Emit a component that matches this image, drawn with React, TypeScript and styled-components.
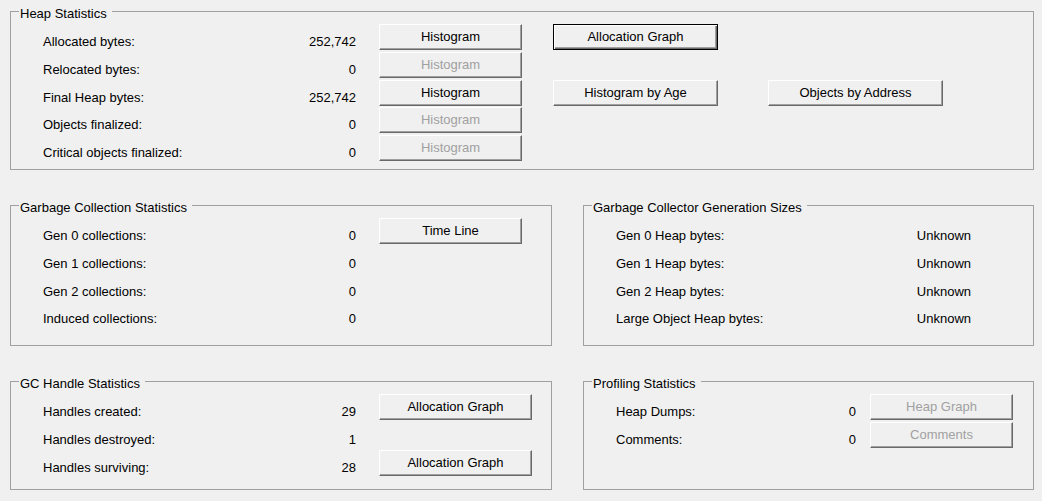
import React from 'react';
import styled, { createGlobalStyle, css } from 'styled-components';

const GlobalStyle = createGlobalStyle`
  html, body { margin: 0; padding: 0; background: #f0f0f0; }
  body {
    font-family: "Liberation Sans", Arial, sans-serif;
    font-size: 13px;
    color: #000;
  }
`;

const Page = styled.div`
  width: 1042px;
  height: 501px;
  box-sizing: border-box;
  padding: 11px 8px 0 10px;
  display: flex;
  flex-direction: column;
  gap: 35px;
`;

const BoxRow = styled.div`
  display: flex;
  gap: 31px;
`;

const GroupBox = styled.section<{ $w: number; $h: number }>`
  position: relative;
  box-sizing: border-box;
  width: ${p => p.$w}px;
  height: ${p => p.$h}px;
  border: 1px solid #a0a0a0;
  padding: 12px 0 0 32px;
`;

const Legend = styled.span`
  position: absolute;
  top: -6px;
  left: 8px;
  padding: 0 5px 0 1px;
  background: #f0f0f0;
  line-height: 15px;
  white-space: nowrap;
`;

const Grid = styled.div<{ $cols: string }>`
  display: grid;
  grid-template-columns: ${p => p.$cols};
  grid-auto-rows: 27.75px;
  align-items: start;
`;

const Stat = styled.div<{ $row: number }>`
  grid-column: 1;
  grid-row: ${p => p.$row};
  display: flex;
  justify-content: space-between;
  padding-top: 10px;
  line-height: 15px;
  white-space: nowrap;
`;

const Button = styled.button<{ $w: number; $row: number; $col: number; $default?: boolean }>`
  grid-row: ${p => p.$row};
  grid-column: ${p => p.$col};
  justify-self: end;
  box-sizing: border-box;
  width: ${p => p.$w}px;
  height: 26px;
  margin: 0;
  padding: 0 0 1px;
  font-family: "Liberation Sans", Arial, sans-serif;
  font-size: 13px;
  line-height: 23px;
  color: #000;
  background: #f0f0f0;
  border: 1px solid;
  border-color: #ffffff #696969 #696969 #ffffff;
  box-shadow: inset -1px -1px #a0a0a0;
  white-space: nowrap;
  cursor: default;
  &:disabled {
    color: #a0a0a0;
  }
  ${p => p.$default && css`
    border-color: #000;
    box-shadow: inset 1px 1px #ffffff, inset -1px -1px #696969, inset -2px -2px #a0a0a0;
  `}
`;

type StatRow = { label: string; value: string };

const heapStats: StatRow[] = [
  { label: 'Allocated bytes:', value: '252,742' },
  { label: 'Relocated bytes:', value: '0' },
  { label: 'Final Heap bytes:', value: '252,742' },
  { label: 'Objects finalized:', value: '0' },
  { label: 'Critical objects finalized:', value: '0' },
];

const gcStats: StatRow[] = [
  { label: 'Gen 0 collections:', value: '0' },
  { label: 'Gen 1 collections:', value: '0' },
  { label: 'Gen 2 collections:', value: '0' },
  { label: 'Induced collections:', value: '0' },
];

const genSizes: StatRow[] = [
  { label: 'Gen 0 Heap bytes:', value: 'Unknown' },
  { label: 'Gen 1 Heap bytes:', value: 'Unknown' },
  { label: 'Gen 2 Heap bytes:', value: 'Unknown' },
  { label: 'Large Object Heap bytes:', value: 'Unknown' },
];

const handleStats: StatRow[] = [
  { label: 'Handles created:', value: '29' },
  { label: 'Handles destroyed:', value: '1' },
  { label: 'Handles surviving:', value: '28' },
];

const profStats: StatRow[] = [
  { label: 'Heap Dumps:', value: '0' },
  { label: 'Comments:', value: '0' },
];

const Stats = ({ rows }: { rows: StatRow[] }) => (
  <>
    {rows.map((r, i) => (
      <Stat key={r.label} $row={i + 1}>
        <span>{r.label}</span>
        <span>{r.value}</span>
      </Stat>
    ))}
  </>
);

export default function App() {
  return (
    <>
      <GlobalStyle />
      <Page>
        <GroupBox $w={1024} $h={159}>
          <Legend>Heap Statistics</Legend>
          <Grid $cols="313px 166px 196px 225px">
            <Stats rows={heapStats} />
            <Button $w={143} $row={1} $col={2}>Histogram</Button>
            <Button $w={143} $row={2} $col={2} disabled>Histogram</Button>
            <Button $w={143} $row={3} $col={2}>Histogram</Button>
            <Button $w={143} $row={4} $col={2} disabled>Histogram</Button>
            <Button $w={143} $row={5} $col={2} disabled>Histogram</Button>
            <Button $w={165} $row={1} $col={3} $default>Allocation Graph</Button>
            <Button $w={165} $row={3} $col={3}>Histogram by Age</Button>
            <Button $w={175} $row={3} $col={4}>Objects by Address</Button>
          </Grid>
        </GroupBox>

        <BoxRow>
          <GroupBox $w={542} $h={141}>
            <Legend>Garbage Collection Statistics</Legend>
            <Grid $cols="313px 166px">
              <Stats rows={gcStats} />
              <Button $w={143} $row={1} $col={2}>Time Line</Button>
            </Grid>
          </GroupBox>
          <GroupBox $w={451} $h={141}>
            <Legend>Garbage Collector Generation Sizes</Legend>
            <Grid $cols="355px">
              <Stats rows={genSizes} />
            </Grid>
          </GroupBox>
        </BoxRow>

        <BoxRow>
          <GroupBox $w={542} $h={109}>
            <Legend>GC Handle Statistics</Legend>
            <Grid $cols="313px 176px">
              <Stats rows={handleStats} />
              <Button $w={153} $row={1} $col={2}>Allocation Graph</Button>
              <Button $w={153} $row={3} $col={2}>Allocation Graph</Button>
            </Grid>
          </GroupBox>
          <GroupBox $w={451} $h={109}>
            <Legend>Profiling Statistics</Legend>
            <Grid $cols="240px 157px">
              <Stats rows={profStats} />
              <Button $w={143} $row={1} $col={2} disabled>Heap Graph</Button>
              <Button $w={143} $row={2} $col={2} disabled>Comments</Button>
            </Grid>
          </GroupBox>
        </BoxRow>
      </Page>
    </>
  );
}
